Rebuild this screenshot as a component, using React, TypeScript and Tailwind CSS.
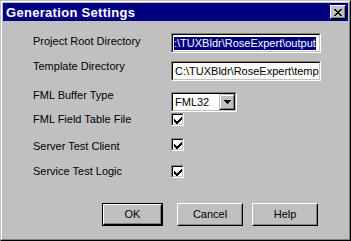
import React from "react";

const font = { fontFamily: '"Liberation Sans", Arial, sans-serif' };

function Sunken({ className = "", children }: { className?: string; children?: React.ReactNode }) {
  return (
    <div className={`shrink-0 border border-t-[#808080] border-l-[#808080] border-r-white border-b-white ${className}`}>
      <div className="w-full h-full border border-t-black border-l-black border-r-[#c0c0c0] border-b-[#c0c0c0] bg-white overflow-hidden">
        {children}
      </div>
    </div>
  );
}

function Check() {
  return (
    <Sunken className="w-[13px] h-[13px]">
      <svg width="11" height="11" viewBox="0 0 11 11" shapeRendering="crispEdges">
        <path
          fill="#000"
          d="M8 2h1v1h-1zM7 3h2v1h-2zM1 4h1v1h-1zM6 4h3v1h-3zM1 5h2v1h-2zM5 5h3v1h-3zM1 6h6v1h-6zM2 7h4v1h-4zM3 8h2v1h-2z"
        />
      </svg>
    </Sunken>
  );
}

function Btn({ label, def = false }: { label: string; def?: boolean }) {
  const inner = (
    <div className="w-full h-full border border-t-white border-l-white border-r-black border-b-black">
      <div className="w-full h-full border border-t-[#c0c0c0] border-l-[#c0c0c0] border-r-[#808080] border-b-[#808080] flex items-center justify-center text-[11px] text-black">
        {label}
      </div>
    </div>
  );
  return def ? (
    <div className="w-[61px] h-[23px] border border-black">{inner}</div>
  ) : (
    <div className="w-[66px] h-[23px]">{inner}</div>
  );
}

export default function App() {
  return (
    <div
      style={font}
      className="w-[351px] h-[241px] bg-[#c0c0c0] border border-t-[#c0c0c0] border-l-[#c0c0c0] border-r-black border-b-black"
    >
      <div className="w-full h-full border border-t-white border-l-white border-r-[#808080] border-b-[#808080] p-px flex flex-col">
        {/* title bar */}
        <div className="h-[18px] shrink-0 bg-[#000080] flex items-center justify-between pl-[3px] pr-[2px]">
          <span className="text-white font-bold text-[13px] tracking-[0.3px] leading-none">Generation Settings</span>
          <div className="w-[16px] h-[14px] border border-t-white border-l-white border-r-black border-b-black">
            <div className="w-full h-full bg-[#c0c0c0] border border-t-[#c0c0c0] border-l-[#c0c0c0] border-r-[#808080] border-b-[#808080] flex items-center justify-center">
              <svg width="8" height="7" viewBox="0 0 8 7" shapeRendering="crispEdges">
                <path
                  fill="#000"
                  d="M0 0h2v1h-2zM6 0h2v1h-2zM1 1h2v1h-2zM5 1h2v1h-2zM2 2h4v1h-4zM3 3h2v1h-2zM2 4h4v1h-4zM1 5h2v1h-2zM5 5h2v1h-2zM0 6h2v1h-2zM6 6h2v1h-2z"
                />
              </svg>
            </div>
          </div>
        </div>

        {/* body */}
        <div className="flex flex-col pl-[30px] text-[11px] leading-[13px] text-black">
          <div className="flex items-start mt-[12px] h-[20px]">
            <div className="w-[138px] mt-[2px]">Project Root Directory</div>
            <Sunken className="w-[150px] h-[20px]">
              <div className="h-full flex items-center pl-[1px] whitespace-nowrap">
                <span className="bg-[#000080] text-white">:\TUXBldr\RoseExpert\output</span>
              </div>
            </Sunken>
          </div>
          <div className="flex items-start mt-[7px] h-[21px]">
            <div className="w-[138px]">Template Directory</div>
            <Sunken className="w-[150px] h-[20px] mt-[1px]">
              <div className="h-full flex items-center pl-[2px] whitespace-nowrap">C:\TUXBldr\RoseExpert\temp</div>
            </Sunken>
          </div>
          <div className="flex items-start mt-[8px] h-[23px]">
            <div className="w-[138px]">FML Buffer Type</div>
            <Sunken className="w-[66px] h-[20px] mt-[3px]">
              <div className="h-full flex items-center justify-between">
                <span className="pl-[2px]">FML32</span>
                <div className="w-[16px] h-[16px] border border-t-[#c0c0c0] border-l-[#c0c0c0] border-r-black border-b-black">
                  <div className="w-full h-full bg-[#c0c0c0] border border-t-white border-l-white border-r-[#808080] border-b-[#808080] flex items-center justify-center">
                    <svg width="7" height="4" viewBox="0 0 7 4" shapeRendering="crispEdges">
                      <path fill="#000" d="M0 0h7v1h-7zM1 1h5v1h-5zM2 2h3v1h-3zM3 3h1v1h-1z" />
                    </svg>
                  </div>
                </div>
              </div>
            </Sunken>
          </div>
          <div className="flex items-start mt-[1px] h-[13px]">
            <div className="w-[138px]">FML Field Table File</div>
            <Check />
          </div>
          <div className="flex items-start mt-[12px] h-[15px]">
            <div className="w-[138px] mt-[2px]">Server Test Client</div>
            <Check />
          </div>
          <div className="flex items-start mt-[12px] h-[13px]">
            <div className="w-[138px]">Service Test Logic</div>
            <Check />
          </div>
        </div>

        <div className="flex mt-[25px] pl-[99px]">
          <Btn label="OK" def />
          <div className="ml-[14px]">
            <Btn label="Cancel" />
          </div>
          <div className="ml-[9px]">
            <Btn label="Help" />
          </div>
        </div>
      </div>
    </div>
  );
}
